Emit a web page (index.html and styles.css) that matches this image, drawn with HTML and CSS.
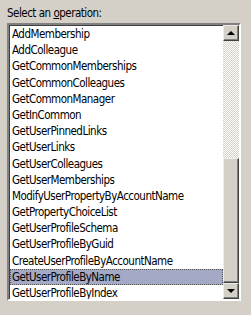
FILE: index.html
```html
<!DOCTYPE html>
<html lang="en">
<head>
    <meta charset="UTF-8">
    <title>Select an operation</title>
    <link rel="stylesheet" href="styles.css">
</head>
<body>
    <div class="panel">
        <div class="caption">Select an <u>o</u>peration:</div>
        <div class="listbox">
            <ul class="items">
                <li>AddMembership</li>
                <li>AddColleague</li>
                <li>GetCommonMemberships</li>
                <li>GetCommonColleagues</li>
                <li>GetCommonManager</li>
                <li>GetInCommon</li>
                <li>GetUserPinnedLinks</li>
                <li>GetUserLinks</li>
                <li>GetUserColleagues</li>
                <li>GetUserMemberships</li>
                <li>ModifyUserPropertyByAccountName</li>
                <li>GetPropertyChoiceList</li>
                <li>GetUserProfileSchema</li>
                <li>GetUserProfileByGuid</li>
                <li>CreateUserProfileByAccountName</li>
                <li class="selected">GetUserProfileByName</li>
                <li>GetUserProfileByIndex</li>
            </ul>
            <div class="scrollbar">
                <div class="arrow up"></div>
                <div class="track"></div>
                <div class="thumb"></div>
                <div class="arrow down"></div>
            </div>
        </div>
    </div>
</body>
</html>
```

FILE: styles.css
```css
body {
    margin: 0;
    background-color: #d4d0c8;
    font-family: "DejaVu Sans Condensed", "DejaVu Sans", sans-serif;
    font-stretch: condensed;
    font-size: 11.5px;
    color: #000;
}
.panel {
    padding: 7px 10px 14px 7px;
}
.caption {
    height: 16px;
    line-height: 13px;
    letter-spacing: -0.5px;
}
.listbox {
    display: flex;
    height: 274px;
    background-color: #fff;
    border: 2px solid;
    border-color: #808080 #fff #fff #808080;
    box-shadow: inset 1px 1px 0 #404040;
}
.items {
    flex: 1;
    list-style: none;
    margin: 0;
    padding: 1px 0 0 1px;
    overflow: hidden;
    letter-spacing: -0.5px;
}
.items li {
    height: 16.2px;
    line-height: 16px;
    padding-left: 2px;
    white-space: nowrap;
}
.items li.selected {
    background-color: #a4aac6;
    outline: 1px dotted #555;
    outline-offset: -1px;
}
.scrollbar {
    width: 16px;
    display: flex;
    flex-direction: column;
    background-color: #d4d0c8;
}
.track {
    height: 117px;
    background-color: #eceae6;
    background-image: repeating-conic-gradient(#d4d0c8 0 25%, #fff 0 50%);
    background-size: 2px 2px;
}
.thumb {
    flex: 1;
    background-color: #d4d0c8;
    border: 1px solid;
    border-color: #eeece8 #404040 #404040 #eeece8;
    box-shadow: inset -1px -1px 0 #808080;
}
.arrow {
    height: 16px;
    box-sizing: border-box;
    background-color: #d4d0c8;
    border: 1px solid;
    border-color: #eeece8 #404040 #404040 #eeece8;
    box-shadow: inset -1px -1px 0 #808080;
    display: flex;
    align-items: center;
    justify-content: center;
}
.arrow::after {
    content: "";
    border-left: 4px solid transparent;
    border-right: 4px solid transparent;
}
.arrow.up::after {
    border-bottom: 4px solid #000;
}
.arrow.down::after {
    border-top: 4px solid #000;
}
```
